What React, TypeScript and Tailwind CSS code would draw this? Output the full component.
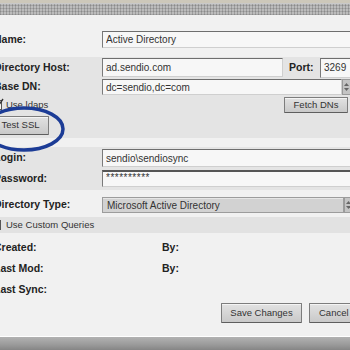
import React from 'react';

const field =
  'bg-[#f7f7f7] border border-t-[#6e6e6e] border-l-[#7a7a7a] border-b-[#cfcfcf] border-r-[#cfcfcf] px-[3px] text-[10px] text-[#333] outline-none shrink-0';

const btn =
  'shrink-0 bg-[linear-gradient(#e2e2e2,#c9c9c9)] border border-[#7d7d7d] border-b-[#5e5e5e] rounded-[1px] text-[9.5px] text-[#333] flex items-center justify-center shadow-[inset_0_1px_0_#f4f4f4]';

function Label({ children, w = 'w-[108px]' }: { children: React.ReactNode; w?: string }) {
  return <span className={`${w} shrink-0 font-bold text-[10.5px] text-[#222]`}>{children}</span>;
}

function Spinner() {
  return (
    <div className="w-[9px] h-full shrink-0 bg-[#c4c4c4] border border-[#9a9a9a] flex flex-col items-center justify-center gap-[2px]">
      <svg width="5" height="3" viewBox="0 0 5 3"><path d="M0 3 L2.5 0 L5 3Z" fill="#666" /></svg>
      <svg width="5" height="3" viewBox="0 0 5 3"><path d="M0 0 L2.5 3 L5 0Z" fill="#666" /></svg>
    </div>
  );
}

function Check({ checked, className = '' }: { checked?: boolean; className?: string }) {
  return (
    <div className={`relative w-[10px] h-[10px] shrink-0 border border-[#555] bg-[#f4f4f4] ${className}`}>
      {checked && (
        <svg className="absolute -top-[3px] left-[1px]" width="10" height="11" viewBox="0 0 10 11">
          <path d="M1 6 L3.5 9 L9 1" stroke="#333" strokeWidth="1.4" fill="none" />
        </svg>
      )}
    </div>
  );
}

export default function App() {
  return (
    <div className="relative w-[350px] h-[350px] overflow-hidden bg-[#f1f1f1] font-['Liberation_Sans',Arial,sans-serif] flex flex-col">
      <div className="h-[3px] bg-[#cdc8ba] shrink-0" />
      <div className="h-[12px] shrink-0 bg-[#bcbcbc] border-t border-[#c9c9c9] [background-image:repeating-linear-gradient(90deg,rgba(0,0,0,0.16)_0_1px,transparent_1px_3px),repeating-linear-gradient(0deg,rgba(0,0,0,0.12)_0_1px,transparent_1px_3px)]" />

      <div className="flex flex-col -ml-[6px] w-[370px] flex-1">
        <div className="flex items-center h-[42px] pt-[7px]">
          <Label>Name:</Label>
          <input readOnly value="Active Directory" className={`${field} w-[262px] h-[17px]`} />
        </div>

        <div className="flex flex-col bg-[#e4e4e4] pt-[1px] pb-[3px]">
          <div className="flex items-center h-[19px]">
            <Label>Directory Host:</Label>
            <input readOnly value="ad.sendio.com" className={`${field} w-[181px] h-[19px]`} />
            <span className="ml-[6px] w-[31px] shrink-0 font-bold text-[10.5px] text-[#222]">Port:</span>
            <input readOnly value="3269" className={`${field} w-[40px] h-[20px]`} />
          </div>
          <div className="flex items-center h-[16px] mt-[2px]">
            <Label>Base DN:</Label>
            <input readOnly value="dc=sendio,dc=com" className={`${field} w-[240px] h-[16px]`} />
            <Spinner />
          </div>
          <div className="flex items-center h-[18px] mt-[1px]">
            <Check checked className="-ml-[2px]" />
            <span className="ml-[4px] text-[9.5px] text-[#333]">Use ldaps</span>
            <button className={`${btn} ml-auto mr-[16px] w-[64px] h-[16px]`}>Fetch DNs</button>
          </div>
          <div className="flex items-center h-[19px] mt-[2px]">
            <button className={`${btn} -ml-[2px] w-[57px] h-[19px]`}>Test SSL</button>
          </div>
        </div>

        <div className="h-[9px]" />

        <div className="flex flex-col bg-[#e4e4e4] pt-[2px] pb-[3px]">
          <div className="flex items-center h-[18px]">
            <Label>Login:</Label>
            <input readOnly value="sendio\sendiosync" className={`${field} w-[262px] h-[18px]`} />
          </div>
          <div className="flex items-center h-[17px] mt-[3px]">
            <Label>Password:</Label>
            <input
              readOnly
              value="**********"
              className={`${field} w-[262px] h-[17px] border-t-2 border-t-[#555] text-[9.5px] tracking-[0.5px] pb-[3px]`}
            />
          </div>
        </div>

        <div className="flex items-center h-[27px] pt-[3px]">
          <Label>Directory Type:</Label>
          <div className="flex h-[16px]">
            <div className="w-[242px] h-full bg-[#d2d2d2] border border-[#9c9c9c] shadow-[inset_0_1px_0_#e6e6e6] px-[4px] flex items-center text-[10px] text-[#333]">
              Microsoft Active Directory
            </div>
            <Spinner />
          </div>
        </div>

        <div className="flex items-center h-[16px] bg-[#e2e2e2]">
          <Check className="-ml-[3px]" />
          <span className="ml-[5px] text-[9.5px] text-[#333]">Use Custom Queries</span>
        </div>

        <div className="flex flex-col pt-[4px]">
          <div className="flex items-center h-[21px]">
            <Label w="w-[168px]">Created:</Label>
            <Label>By:</Label>
          </div>
          <div className="flex items-center h-[21px]">
            <Label w="w-[168px]">Last Mod:</Label>
            <Label>By:</Label>
          </div>
          <div className="flex items-center h-[21px]">
            <Label w="w-[168px]">Last Sync:</Label>
          </div>
        </div>

        <div className="flex items-center h-[20px] mt-[3px]">
          <button className={`${btn} ml-[227px] w-[81px] h-[20px]`}>Save Changes</button>
          <button className={`${btn} ml-[7px] w-[52px] h-[20px] justify-start pl-[9px]`}>Cancel</button>
        </div>
      </div>

      <div className="h-[1px] bg-white shrink-0" />
      <div className="h-[13px] shrink-0 bg-[linear-gradient(#b2b2b2,#9a9a9a_60%,#858585)]" />

      <svg className="absolute left-0 top-0 pointer-events-none" width="350" height="350">
        <ellipse cx="24" cy="129" rx="39" ry="21" fill="none" stroke="#1c3c96" strokeWidth="3.5" />
      </svg>
    </div>
  );
}
